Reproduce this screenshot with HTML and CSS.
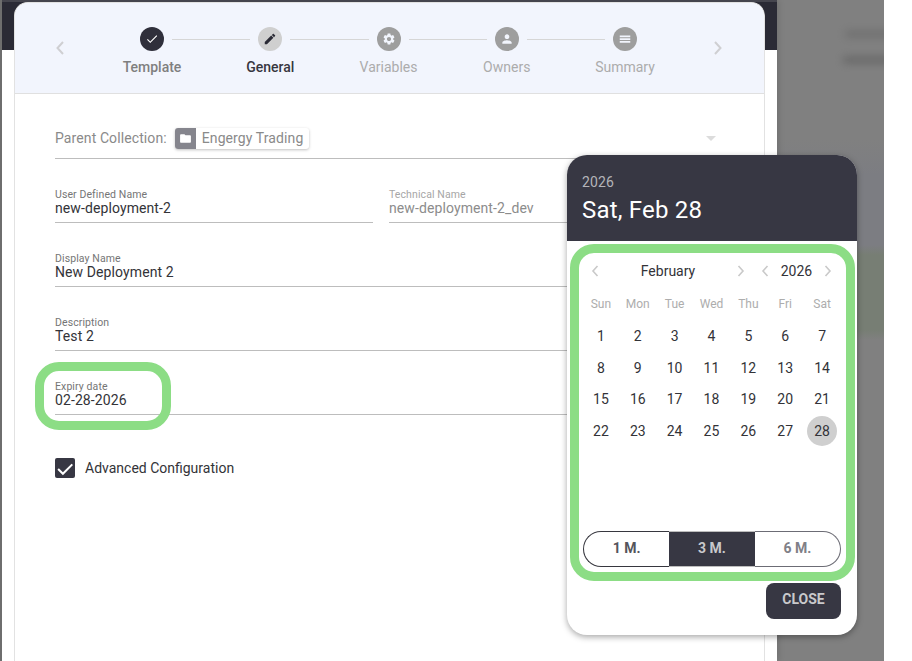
FILE: index.html
```html
<!DOCTYPE html>
<html lang="en">
<head>
<meta charset="utf-8">
<title>New Deployment</title>
<link rel="stylesheet" href="styles.css">
</head>
<body>
<div class="stage">
  <div class="sheet">
    <div class="sheet-top"></div>
  </div>
  <div class="backdrop">
    <div class="ghost ghost-a"></div>
    <div class="ghost ghost-b"></div>
  </div>

  <section class="card">
    <header class="stepper">
      <svg class="chev chev-left" viewBox="0 0 10 16"><path d="M8 2 2.500 8 8 14" /></svg>
      <div class="steps">
        <div class="step done">
          <span class="dot"><svg viewBox="0 0 24 24"><path d="M9 16.170 4.830 12l-1.420 1.410L9 19 21 7l-1.410-1.410z"/></svg></span>
          <span class="step-label">Template</span>
        </div>
        <i class="link"></i>
        <div class="step current">
          <span class="dot"><svg viewBox="0 0 24 24"><path d="M3 17.250V21h3.750L17.810 9.940l-3.750-3.750L3 17.250zM20.710 7.040c.39-.39.39-1.020 0-1.410l-2.340-2.340c-.39-.39-1.020-.39-1.410 0l-1.830 1.830 3.750 3.750 1.830-1.830z"/></svg></span>
          <span class="step-label">General</span>
        </div>
        <i class="link"></i>
        <div class="step">
          <span class="dot"><svg viewBox="0 0 24 24"><path d="M19.140 12.940c.04-.3.06-.61.06-.94 0-.32-.02-.64-.07-.94l2.030-1.580c.18-.14.23-.41.12-.61l-1.920-3.320c-.12-.22-.37-.29-.59-.22l-2.390.96c-.5-.38-1.030-.7-1.620-.94l-.36-2.540c-.04-.24-.24-.41-.48-.41h-3.840c-.24 0-.43.17-.47.41l-.36 2.540c-.59.24-1.130.57-1.620.94l-2.390-.96c-.22-.08-.47 0-.59.22L2.740 8.870c-.12.21-.08.47.12.61l2.030 1.580c-.05.3-.09.63-.09.94s.02.64.07.94l-2.030 1.580c-.18.14-.23.41-.12.61l1.920 3.320c.12.22.37.29.59.22l2.390-.96c.5.38 1.030.7 1.620.94l.36 2.540c.05.24.24.41.48.41h3.840c.24 0 .44-.17.47-.41l.36-2.540c.59-.24 1.130-.56 1.620-.94l2.390.96c.22.08.47 0 .59-.22l1.920-3.320c.12-.22.07-.47-.12-.61l-2.010-1.580zM12 15.600c-1.980 0-3.600-1.620-3.600-3.600s1.620-3.600 3.600-3.600 3.600 1.620 3.600 3.600-1.620 3.600-3.600 3.600z"/></svg></span>
          <span class="step-label">Variables</span>
        </div>
        <i class="link"></i>
        <div class="step">
          <span class="dot"><svg viewBox="0 0 24 24"><path d="M12 12c2.210 0 4-1.790 4-4s-1.790-4-4-4-4 1.790-4 4 1.790 4 4 4zm0 2c-2.670 0-8 1.340-8 4v2h16v-2c0-2.660-5.330-4-8-4z"/></svg></span>
          <span class="step-label">Owners</span>
        </div>
        <i class="link"></i>
        <div class="step">
          <span class="dot"><svg viewBox="0 0 24 24"><path d="M3 6h18v3H3zM3 10.700h18v3H3zM3 15.400h18v3H3z"/></svg></span>
          <span class="step-label">Summary</span>
        </div>
      </div>
      <svg class="chev chev-right" viewBox="0 0 10 16"><path d="M2 2 7.500 8 2 14" /></svg>
    </header>

    <form class="form">
      <div class="parent-row">
        <span class="parent-label">Parent Collection:</span>
        <span class="chip">
          <span class="chip-icon"><svg viewBox="0 0 24 24"><path d="M10 4H4c-1.100 0-2 .9-2 2v12c0 1.100.9 2 2 2h16c1.100 0 2-.9 2-2V8c0-1.100-.9-2-2-2h-8l-2-2z"/></svg></span>
          <span class="chip-text">Engergy Trading</span>
        </span>
        <i class="caret"></i>
      </div>

      <div class="field-pair">
        <div class="field field-main">
          <label class="field-label">User Defined Name</label>
          <div class="field-value">new-deployment-2</div>
        </div>
        <div class="field field-muted">
          <label class="field-label">Technical Name</label>
          <div class="field-value">new-deployment-2_dev</div>
        </div>
      </div>
      <div class="field">
        <label class="field-label">Display Name</label>
        <div class="field-value">New Deployment 2</div>
      </div>
      <div class="field">
        <label class="field-label">Description</label>
        <div class="field-value">Test 2</div>
      </div>
      <div class="field">
        <label class="field-label">Expiry date</label>
        <div class="field-value">02-28-2026</div>
      </div>

      <div class="check-row">
        <span class="checkbox"><svg viewBox="0 0 24 24"><path d="M9.500 17.200 4.600 12.300l-1.700 1.700 6.600 6.600L21.600 8.500l-1.700-1.700z"/></svg></span>
        <span class="check-label">Advanced Configuration</span>
      </div>
    </form>
  </section>

  <div class="mark mark-expiry"></div>

  <aside class="picker">
    <div class="picker-head">
      <div class="picker-year">2026</div>
      <div class="picker-date">Sat, Feb 28</div>
    </div>
    <div class="picker-body">
      <div class="nav-row">
        <div class="nav nav-month">
          <svg class="nav-chev" viewBox="0 0 10 16"><path d="M7.500 3 3 8l4.500 5"/></svg>
          <span>February</span>
          <svg class="nav-chev" viewBox="0 0 10 16"><path d="M2.500 3 7 8l-4.500 5"/></svg>
        </div>
        <div class="nav nav-year">
          <svg class="nav-chev" viewBox="0 0 10 16"><path d="M7.500 3 3 8l4.500 5"/></svg>
          <span>2026</span>
          <svg class="nav-chev" viewBox="0 0 10 16"><path d="M2.500 3 7 8l-4.500 5"/></svg>
        </div>
      </div>
      <div class="weekdays">
        <span>Sun</span><span>Mon</span><span>Tue</span><span>Wed</span><span>Thu</span><span>Fri</span><span>Sat</span>
      </div>
      <div class="days">
        <span>1</span><span>2</span><span>3</span><span>4</span><span>5</span><span>6</span><span>7</span>
        <span>8</span><span>9</span><span>10</span><span>11</span><span>12</span><span>13</span><span>14</span>
        <span>15</span><span>16</span><span>17</span><span>18</span><span>19</span><span>20</span><span>21</span>
        <span>22</span><span>23</span><span>24</span><span>25</span><span>26</span><span>27</span><span class="selected">28</span>
      </div>
      <div class="toggle">
        <button class="toggle-btn first" type="button">1 M.</button>
        <button class="toggle-btn active" type="button">3 M.</button>
        <button class="toggle-btn last" type="button">6 M.</button>
      </div>
      <div class="picker-actions">
        <button class="close-btn" type="button">CLOSE</button>
      </div>
    </div>
    <div class="mark mark-calendar"></div>
  </aside>
</div>
</body>
</html>
```

FILE: styles.css
```css
* { box-sizing: border-box; }
html, body { margin: 0; padding: 0; background: #fff; }
body { font-family: Roboto, "Liberation Sans", sans-serif; font-size: 14px; color: #333338; }

.stage {
  position: relative;
  width: 884px;
  height: 661px;
  display: flex;
  overflow: hidden;
  border-left: 2px solid #6e6e6e;
  background: #808080;
}
.sheet {
  width: 775px;
  flex: none;
  background: #fff;
  box-shadow: 2px 0 6px rgba(0,0,0,.12);
  position: relative;
  z-index: 1;
}
.sheet-top {
  height: 50px;
  background: #2a2a35;
  border-top: 2px solid #45454e;
}
.backdrop {
  flex: 1;
  position: relative;
  background: linear-gradient(to bottom, #808080 0, #808080 140px, #7c7d82 175px, #7c7d82 245px, #777e74 255px, #777e74 330px, #808080 340px);
}
.ghost { position: absolute; background: #5a5a5a; filter: blur(4px); height: 6px; }
.ghost-a { left: 68px; top: 31px; width: 50px; opacity: .5; }
.ghost-b { left: 66px; top: 57px; width: 50px; opacity: .75; }

.card {
  position: absolute;
  z-index: 2;
  left: 12px;
  top: 2px;
  width: 751px;
  height: 659px;
  background: #fff;
  border: 1px solid #e2e2e2;
  border-bottom: 0;
  border-radius: 14px 14px 0 0;
  overflow: hidden;
}

/* stepper */
.stepper {
  height: 91px;
  display: flex;
  align-items: flex-start;
  background: #f2f5fd;
  border-bottom: 1px solid #e0e0e0;
}
.chev { width: 10px; height: 16px; flex: none; margin-top: 37px; fill: none; stroke: #cfcfd2; stroke-width: 2; }
.chev-left { margin-left: 40px; }
.chev-right { margin-left: 76px; }
.steps {
  width: 497px;
  margin-left: 75px;
  margin-top: 24px;
  display: flex;
  align-items: flex-start;
  gap: 8px;
}
.step { width: 24px; flex: none; display: flex; flex-direction: column; align-items: center; }
.dot {
  width: 24px;
  height: 24px;
  border-radius: 50%;
  background: #9e9e9e;
  display: flex;
  align-items: center;
  justify-content: center;
}
.dot svg { width: 14px; height: 14px; fill: #f2f5fd; }
.step-label { margin-top: 7px; line-height: 18px; white-space: nowrap; color: #acacac; font-weight: 400; }
.step.done .dot { background: #2f2f3b; }
.step.done .dot svg { fill: #fff; }
.step.done .step-label { color: #7f7f7f; font-weight: 500; }
.step.current .dot { background: #cfcfcf; }
.step.current .dot svg { fill: #2a2a35; }
.step.current .step-label { color: #37373f; font-weight: 500; }
.link { flex: 1; height: 1px; margin-top: 11.500px; background: #d6d6d6; }

/* form */
.form { padding: 34px 40px 0; }
.parent-row {
  height: 31px;
  display: flex;
  align-items: flex-start;
  border-bottom: 1px solid #bdbdbd;
  color: #8a8a8a;
  margin-bottom: 29px;
}
.parent-label { line-height: 21px; letter-spacing: .1px; }
.chip {
  display: flex;
  margin-left: 8px;
  height: 21px;
  background: #fff;
  border-radius: 3px;
  box-shadow: 0 1px 3px rgba(0,0,0,.25);
}
.chip-icon {
  width: 21px;
  background: #85858d;
  border-radius: 3px 0 0 3px;
  display: flex;
  align-items: center;
  justify-content: center;
}
.chip-icon svg { width: 13px; height: 13px; fill: #fff; }
.chip-text { padding: 0 6px; line-height: 21px; letter-spacing: .1px; }
.caret {
  margin-left: auto;
  margin-right: 8px;
  margin-top: 8px;
  width: 0;
  height: 0;
  border-left: 5px solid transparent;
  border-right: 5px solid transparent;
  border-top: 5px solid #dcdcdc;
}
.field-pair { display: flex; gap: 16px; }
.field-pair .field { flex: 1; }
.field-pair .field-main { flex: 0 0 318px; }
.field {
  height: 35px;
  margin-bottom: 29px;
  padding-top: 1px;
  border-bottom: 1px solid #bdbdbd;
  color: #333338;
}
.field-label { display: block; font-size: 10.500px; letter-spacing: .1px; line-height: 12px; color: #757575; }
.field-value { line-height: 16px; margin-top: -1px; letter-spacing: .1px; }
.field-muted .field-label { color: #a6a6a6; }
.field-muted .field-value { color: #8c8c8c; }
.check-row { display: flex; align-items: center; gap: 10px; margin-top: 43px; height: 20px; }
.checkbox {
  width: 20px;
  height: 20px;
  border-radius: 2px;
  background: #373743;
  display: flex;
  align-items: center;
  justify-content: center;
}
.checkbox svg { width: 20px; height: 20px; fill: #fff; }
.check-label { color: #333338; }

/* highlights */
.mark { position: absolute; border: 9px solid #8cdd85; pointer-events: none; }
.mark-expiry { z-index: 3; left: 33px; top: 362px; width: 136px; height: 68px; border-radius: 24px; }
.mark-calendar { left: 3px; top: 89px; width: 285px; height: 337px; border-radius: 24px; }

/* picker */
.picker {
  position: absolute;
  z-index: 4;
  left: 565px;
  top: 155px;
  width: 290px;
  height: 480px;
  background: #fff;
  border-radius: 20px;
  box-shadow: 0 2px 6px rgba(0,0,0,.35);
  display: flex;
  flex-direction: column;
}
.picker-head {
  height: 86px;
  flex: none;
  background: #373743;
  border-radius: 20px 20px 0 0;
  padding: 19px 15px 0;
}
.picker-year { line-height: 16px; color: #b4b4b9; letter-spacing: .1px; }
.picker-date { margin-top: 6px; font-size: 24px; line-height: 28px; color: #fff; font-weight: 400; letter-spacing: .2px; }
.picker-body { flex: 1; padding: 20px 16px 0; display: flex; flex-direction: column; }
.nav-row { display: flex; height: 20px; align-items: center; color: #333338; }
.nav { display: flex; align-items: center; }
.nav span { flex: 1; text-align: center; }
.nav-month { width: 163px; padding-left: 7px; }
.nav-year { width: 73px; margin-left: 14px; }
.nav-chev { width: 10px; height: 16px; flex: none; fill: none; stroke: #c9c9c9; stroke-width: 1.600; }
.weekdays, .days { display: grid; grid-template-columns: repeat(7, 1fr); width: 258px; margin-left: -.5px; text-align: center; }
.weekdays { margin-top: 15px; font-size: 12px; line-height: 16px; color: #adadad; }
.days { margin-top: 8px; grid-auto-rows: 31.700px; font-size: 14px; color: #333338; }
.days span { display: flex; align-items: center; justify-content: center; height: 31.700px; }
.days .selected { position: relative; z-index: 0; }
.days .selected::before {
  content: "";
  position: absolute;
  z-index: -1;
  left: 50%;
  top: 50%;
  width: 30px;
  height: 30px;
  margin: -15px 0 0 -15px;
  border-radius: 50%;
  background: #cfcfcf;
}
.toggle { margin-top: auto; display: flex; width: 258px; height: 36px; }
.toggle-btn {
  flex: 1;
  padding: 0 0 2px;
  font: 700 14px Roboto, "Liberation Sans", sans-serif;
  background: #fff;
  border: 1px solid #37373f;
}
.toggle-btn.first { color: #55555c; border-radius: 18px 0 0 18px; border-right: 0; }
.toggle-btn.active { background: #373743; color: #c9c9cc; border-left: 0; border-right: 0; border-top: 1px solid #bdbdbd; border-bottom: 1px solid #bdbdbd; }
.toggle-btn.last { color: #808087; border-color: #6c6c75; border-radius: 0 18px 18px 0; border-left: 0; }
.picker-actions { display: flex; justify-content: flex-end; margin-top: 16px; margin-bottom: 16px; width: 258px; }
.close-btn {
  width: 75px;
  height: 36px;
  padding: 0 0 4px;
  border: 0;
  border-radius: 8px;
  background: #373743;
  color: #c9c9cc;
  font: 700 14px Roboto, "Liberation Sans", sans-serif;
}
```
